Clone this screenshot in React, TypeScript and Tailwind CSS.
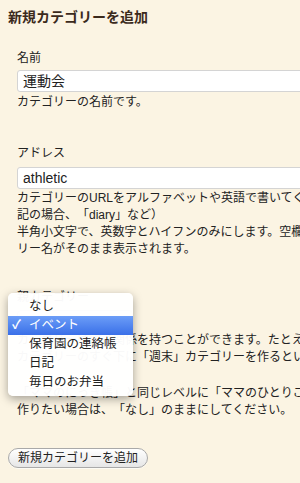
import React from "react";

const font = { fontFamily: '"Liberation Sans", "Noto Sans CJK JP", sans-serif' };

export default function App() {
  return (
    <div
      className="relative w-[300px] h-[483px] overflow-hidden bg-[#fbf4e3] text-[#222] text-[12px] leading-[17px] [text-spacing-trim:space-all]"
      style={font}
    >
      <h1 className="pt-[7px] pl-[8px] text-[14px] leading-[20px] font-bold text-[#3b2a1c] whitespace-nowrap">
        新規カテゴリーを追加
      </h1>

      <div className="pl-[17px] w-[500px]">
        <div className="mt-[23px]">名前</div>
        <div className="mt-[3px] h-[22px] w-[400px] bg-white border border-[#d4d4d4] rounded-l-[3px] pl-[5px] text-[14px] leading-[20px] flex items-center">
          運動会
        </div>
        <div className="mt-[1.5px] whitespace-nowrap">カテゴリーの名前です。</div>

        <div className="mt-[34px]">アドレス</div>
        <div className="mt-[5.5px] h-[22px] w-[400px] bg-white border border-[#d4d4d4] rounded-l-[3px] pl-[5px] text-[14px] leading-[20px] flex items-center">
          athletic
        </div>
        <p className="mt-[0.5px] whitespace-nowrap">
          カテゴリーのURLをアルファベットや英語で書いてください（日
          <br />
          記の場合、「diary」など）
          <br />
          半角小文字で、英数字とハイフンのみにします。空欄の場合、カテゴ
          <br />
          リー名がそのまま表示されます。
        </p>

        <div className="mt-[31px]">親カテゴリー</div>
        <div className="mt-[4px] h-[22px] w-[116px] bg-white border border-[#bbb] rounded-[4px]" />
        <p className="mt-[0px] whitespace-nowrap">
          カテゴリーは親子関係を持つことができます。たとえば「お出かけ」
          <br />
          カテゴリーのすぐ下に「週末」カテゴリーを作るといった使い方ができます。
        </p>
        <p className="mt-[19px] whitespace-nowrap">
          「ママのにっき帳」と同じレベルに「ママのひとりごと」カテゴリーを
          <br />
          作りたい場合は、「なし」のままにしてください。
        </p>
      </div>

      <div className="pl-[8px] mt-[29px]">
        <button className="h-[20px] px-[9px] rounded-full border border-[#a9a9a9] bg-gradient-to-b from-white to-[#e6e6e6] text-[12px] leading-[18px] text-[#222] whitespace-nowrap shadow-[0_1px_0_rgba(255,255,255,0.6)]">
          新規カテゴリーを追加
        </button>
      </div>

      <div className="absolute left-[8px] top-[293px] w-[125px] bg-white/[0.97] rounded-[5px] shadow-[0_3px_10px_rgba(0,0,0,0.35)] py-[4px] text-[12.5px]">
        <div className="h-[19px] leading-[19px] pl-[21px]">なし</div>
        <div className="h-[19px] leading-[19px] pl-[4px] text-white bg-gradient-to-b from-[#6c9df7] to-[#3a6fe8] flex">
          <span className="w-[17px] font-bold">✓</span>
          <span>イベント</span>
        </div>
        <div className="h-[19px] leading-[19px] pl-[21px] whitespace-nowrap">保育園の連絡帳</div>
        <div className="h-[19px] leading-[19px] pl-[21px]">日記</div>
        <div className="h-[19px] leading-[19px] pl-[21px]">毎日のお弁当</div>
      </div>
    </div>
  );
}
